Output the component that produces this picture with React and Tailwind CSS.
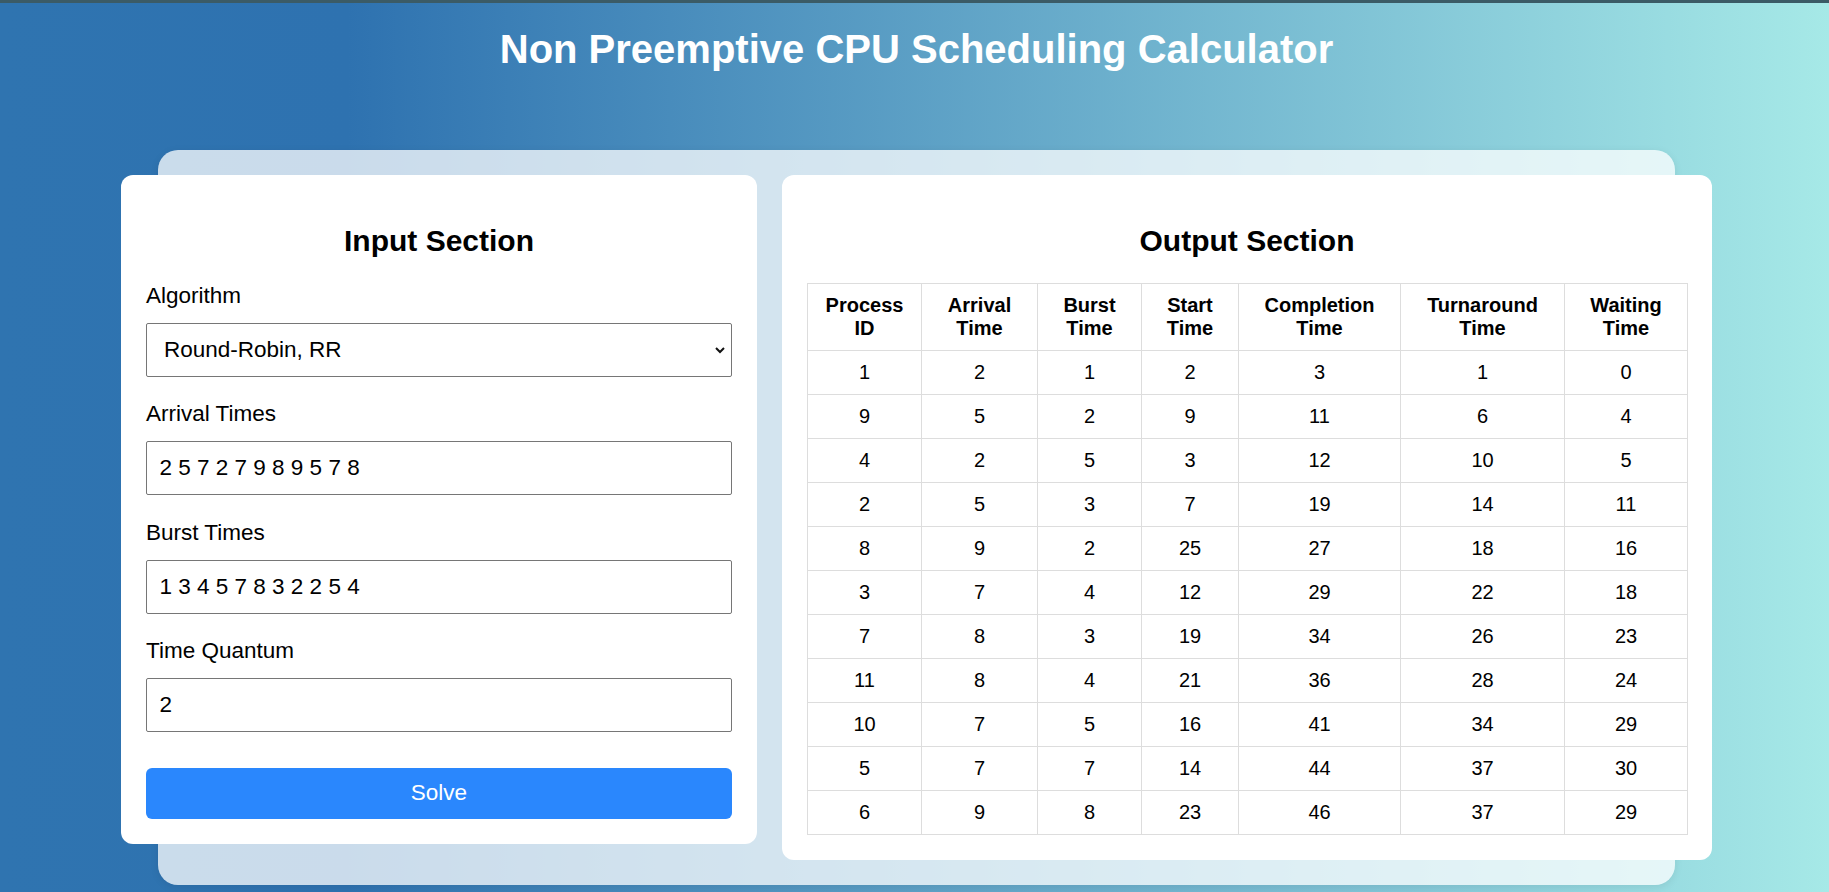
import { useState } from "react";

const rows = [
  [1, 2, 1, 2, 3, 1, 0],
  [9, 5, 2, 9, 11, 6, 4],
  [4, 2, 5, 3, 12, 10, 5],
  [2, 5, 3, 7, 19, 14, 11],
  [8, 9, 2, 25, 27, 18, 16],
  [3, 7, 4, 12, 29, 22, 18],
  [7, 8, 3, 19, 34, 26, 23],
  [11, 8, 4, 21, 36, 28, 24],
  [10, 7, 5, 16, 41, 34, 29],
  [5, 7, 7, 14, 44, 37, 30],
  [6, 9, 8, 23, 46, 37, 29],
];

const headers = [
  ["Process", "ID"],
  ["Arrival", "Time"],
  ["Burst", "Time"],
  ["Start", "Time"],
  ["Completion", "Time"],
  ["Turnaround", "Time"],
  ["Waiting", "Time"],
];

const colWidths = ["w-[114px]", "w-[116px]", "w-[104px]", "w-[97px]", "w-[162px]", "w-[164px]", "w-[123px]"];

function Field({ label, children }) {
  return (
    <div className="mt-[24.5px]">
      <label className="block text-[22.5px] leading-[25px] mb-[15px]">{label}</label>
      {children}
    </div>
  );
}

function InputSection() {
  const [algo, setAlgo] = useState("rr");
  const [arrival, setArrival] = useState("2 5 7 2 7 9 8 9 5 7 8");
  const [burst, setBurst] = useState("1 3 4 5 7 8 3 2 2 5 4");
  const [quantum, setQuantum] = useState("2");

  const inputClass =
    "block w-full h-[54px] border border-[#767676] rounded-[2px] px-[12.5px] text-[22.5px] text-black bg-white outline-none";

  return (
    <div className="w-[636px] shrink-0 bg-white rounded-[12px] p-[25px]">
      <h2 className="mt-[24px] text-[30px] leading-[34px] font-bold text-center text-black">Input Section</h2>

      <Field label="Algorithm">
        <div className="relative">
          <select
            value={algo}
            onChange={e => setAlgo(e.target.value)}
            className="block w-full h-[54px] appearance-none border border-[#767676] rounded-[2px] pl-[17px] pr-8 text-[22.5px] text-black bg-white outline-none"
          >
            <option value="fcfs">First Come First Serve, FCFS</option>
            <option value="sjf">Shortest Job First, SJF</option>
            <option value="rr">Round-Robin, RR</option>
          </select>
          <svg
            className="pointer-events-none absolute right-[6px] top-1/2 -translate-y-1/2"
            width="12"
            height="8"
            viewBox="0 0 12 8"
          >
            <path d="M2 2 L6 6 L10 2" fill="none" stroke="#111" strokeWidth="2" />
          </svg>
        </div>
      </Field>

      <Field label="Arrival Times">
        <input className={inputClass} value={arrival} onChange={e => setArrival(e.target.value)} />
      </Field>

      <Field label="Burst Times">
        <input className={inputClass} value={burst} onChange={e => setBurst(e.target.value)} />
      </Field>

      <Field label="Time Quantum">
        <input className={inputClass} value={quantum} onChange={e => setQuantum(e.target.value)} />
      </Field>

      <button className="mt-[35.5px] block w-full h-[51px] rounded-[6px] bg-[#2a87fd] text-white text-[22.5px]">
        Solve
      </button>
    </div>
  );
}

function OutputSection() {
  return (
    <div className="w-[930px] shrink-0 bg-white rounded-[12px] p-[25px]">
      <h2 className="mt-[24px] text-[30px] leading-[34px] font-bold text-center text-black">Output Section</h2>
      <table className="mt-[25px] w-full table-fixed border-collapse text-[20px] leading-[23px] text-black">
        <colgroup>
          {colWidths.map((w, i) => (
            <col key={i} className={w} />
          ))}
        </colgroup>
        <thead>
          <tr>
            {headers.map(([a, b]) => (
              <th key={a} className="border border-[#dddddd] p-[10px] font-bold text-center">
                {a}
                <br />
                {b}
              </th>
            ))}
          </tr>
        </thead>
        <tbody>
          {rows.map((r, i) => (
            <tr key={i}>
              {r.map((v, j) => (
                <td key={j} className="border border-[#dddddd] p-[10px] text-center">
                  {v}
                </td>
              ))}
            </tr>
          ))}
        </tbody>
      </table>
    </div>
  );
}

export default function App() {
  return (
    <div className="min-h-screen border-t-[3px] border-[#3b5b66] bg-[linear-gradient(to_right,#2f74b0_0%,#2e72b0_19%,#a6e9e7_100%)] font-['Liberation_Sans',Arial,sans-serif] pl-[4px] pb-[7px]">
      <h1 className="mt-[24px] text-[40px] leading-[45px] font-bold text-white text-center">
        Non Preemptive CPU Scheduling Calculator
      </h1>

      <div className="mx-auto mt-[78px] w-[1517px] rounded-[20px] bg-white/75 pt-[25px] pb-[25px] shadow-[0_2px_8px_rgba(0,0,0,0.08)]">
        <div className="-mx-[37px] flex items-start gap-[25px]">
          <InputSection />
          <OutputSection />
        </div>
      </div>
    </div>
  );
}
